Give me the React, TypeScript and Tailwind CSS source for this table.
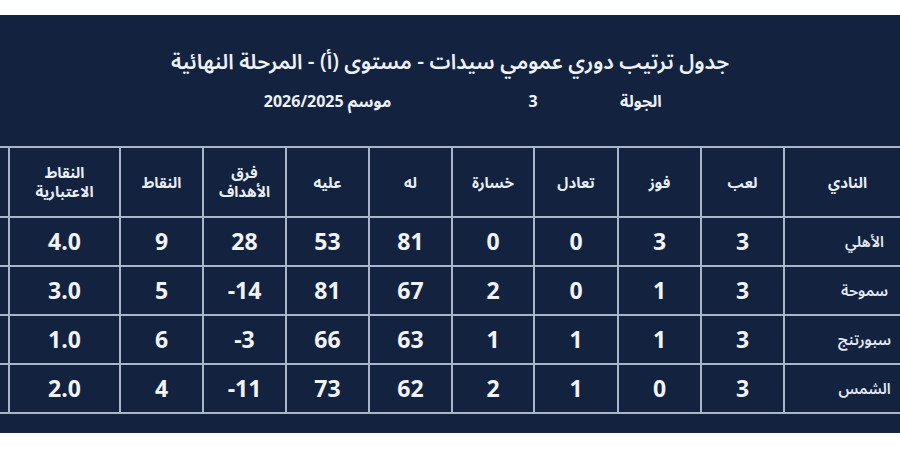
import React from 'react';

const FONT = '"Open Sans", "Noto Sans Arabic", "DejaVu Sans", sans-serif';

const HEADERS = ['', 'النقاط\nالاعتبارية', 'النقاط', 'فرق\nالأهداف', 'عليه', 'له', 'خسارة', 'تعادل', 'فوز', 'لعب', 'النادي'];

const ROWS = [
  ['', '4.0', '9', '28', '53', '81', '0', '0', '3', '3', 'الأهلي'],
  ['', '3.0', '5', '-14', '81', '67', '2', '0', '1', '3', 'سموحة'],
  ['', '1.0', '6', '-3', '66', '63', '1', '1', '1', '3', 'سبورتنج'],
  ['', '2.0', '4', '-11', '73', '62', '2', '1', '0', '3', 'الشمس'],
];

export default function App() {
  return (
    <div className="w-[900px] h-[450px] bg-white pt-[15px] overflow-hidden" style={{ fontFamily: FONT }}>
      <div className="h-[418px] bg-[#13233f] overflow-hidden text-white">
        {/* Title */}
        <div dir="rtl" className="pt-[28px] text-center text-[21px] font-semibold leading-[36px] text-[#eef1f6]">
          جدول ترتيب دوري عمومي سيدات - مستوى (أ) - المرحلة النهائية
        </div>

        {/* Round / season */}
        <div dir="rtl" className="mt-[10px] flex items-center h-[24px] text-[16px] font-bold text-[#eef1f6]">
          <div className="w-[280px] text-left">الجولة</div>
          <div className="w-[174px] text-center">3</div>
          <div className="w-[237px] text-center">
            موسم <span>2026/2025</span>
          </div>
        </div>

        {/* Standings table */}
        <div className="mt-[33px] ml-[-52px] w-[1012px] bg-[#a9b6ca] p-[2px] grid gap-[2px] grid-cols-[58px_109px_81px_81px_81px_81px_80px_82px_81px_81px_125px] grid-rows-[68px_47px_47px_47px_47px]">
          {HEADERS.map((h, i) => (
            <div
              key={'h' + i}
              dir="rtl"
              className="bg-[#13233f] flex items-center justify-center text-center whitespace-pre-line text-[15px] font-bold leading-[19px] text-[#e9edf4]"
            >
              {h}
            </div>
          ))}
          {ROWS.map((row, r) =>
            row.map((c, i) =>
              i === 10 ? (
                <div
                  key={r + '-' + i}
                  dir="rtl"
                  className="bg-[#13233f] flex items-center justify-center text-center pl-[34px] text-[15px] font-semibold text-[#e4e9f1]"
                >
                  {c}
                </div>
              ) : (
                <div
                  key={r + '-' + i}
                  className="bg-[#13233f] flex items-center justify-center text-[23px] font-bold text-[#f1f3f7]"
                >
                  {c && <span dir="ltr">{'\u200E' + c}</span>}
                </div>
              )
            )
          )}
        </div>
      </div>
    </div>
  );
}
